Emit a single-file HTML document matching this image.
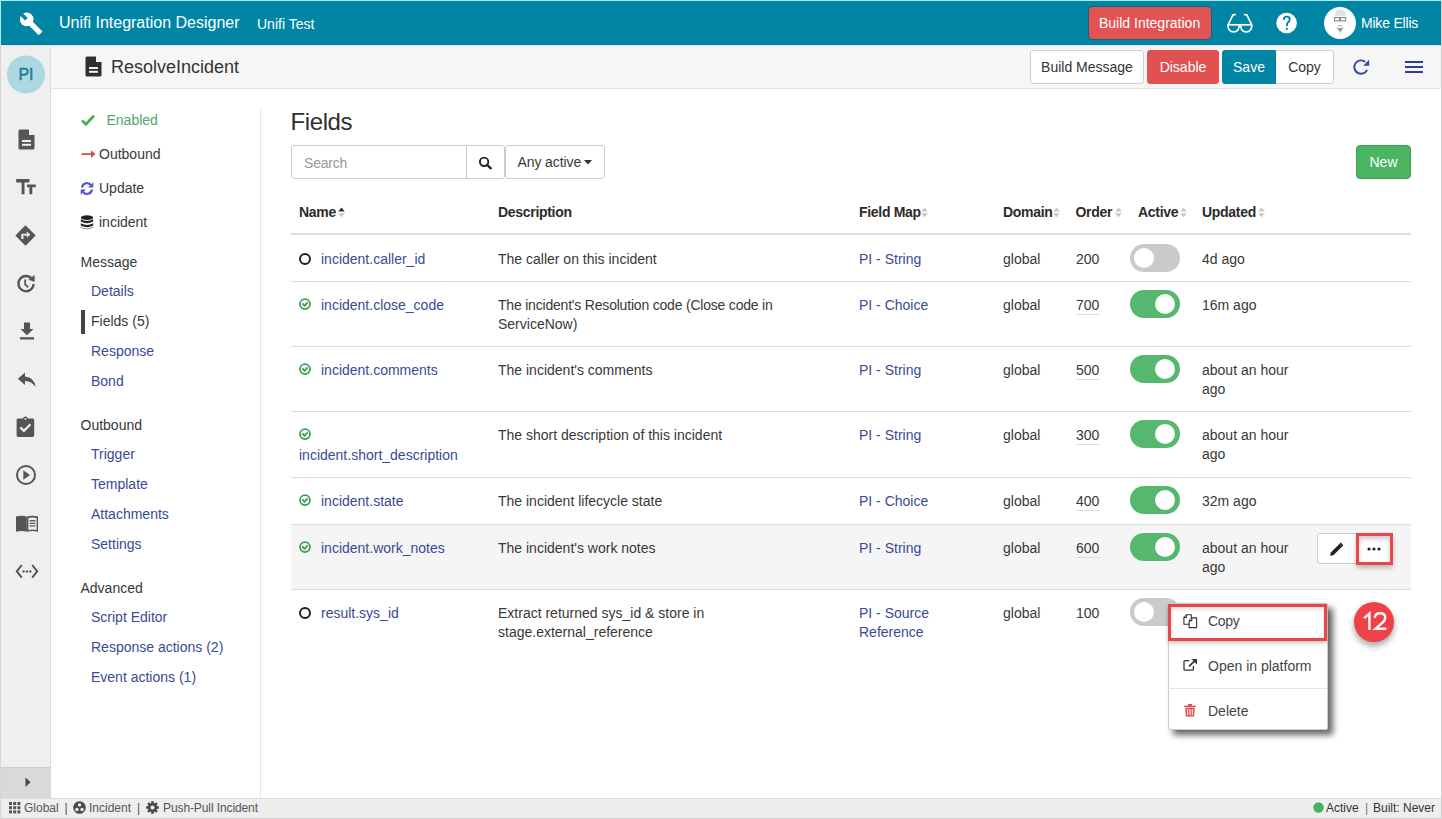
<!DOCTYPE html>
<html><head><meta charset="utf-8">
<style>
*{box-sizing:border-box;margin:0;padding:0}
html,body{width:1442px;height:819px;overflow:hidden;background:#fff;font-family:"Liberation Sans",sans-serif;color:#333;font-size:14px}
.a{position:absolute}
.t{position:absolute;white-space:nowrap;line-height:20px}
svg{position:absolute;overflow:visible}
#hdr{position:absolute;left:0;top:0;width:1442px;height:45px;background:#0085a5;border-top:1px solid #aee6f2;border-left:1px solid #b5e3ee}
#side{position:absolute;left:0;top:45px;width:51px;height:753px;background:#efefef;border-right:1px solid #dcdcdc;border-left:1px solid #d6d6d6}
#sub{position:absolute;left:51px;top:45px;width:1391px;height:44px;background:#f6f6f6;border-bottom:1px solid #e3e3e3}
#foot{position:absolute;left:0;top:798px;width:1442px;height:21px;background:#eeeeee;border-top:1px solid #dcdcdc;border-left:1px solid #d6d6d6;border-bottom:1px solid #cfcfcf}
#rb{position:absolute;left:1441px;top:0;width:1px;height:819px;background:#cfcfcf}
.btn{position:absolute;border:1px solid #cfcfcf;border-radius:3px;background:#fff;color:#333;font-size:14px;text-align:center;line-height:32px}
.lnk{color:#3c4f9f}
.nav{position:absolute;white-space:nowrap;font-size:14px;line-height:20px}
</style></head><body>
<div id="hdr">
  <svg style="left:13px;top:5.5px" width="34" height="34" viewBox="0 0 34 34">
    <circle cx="12.7" cy="12.4" r="6.8" fill="#fff"/>
    <line x1="12.7" y1="12.4" x2="26.6" y2="26.3" stroke="#fff" stroke-width="5.4"/>
    <line x1="3.5" y1="3.3" x2="12.4" y2="12.2" stroke="#0085a5" stroke-width="3.6"/>
  </svg>
  <div class="t" style="left:58px;top:12px;font-size:16px;color:#fff">Unifi Integration Designer</div>
  <div class="t" style="left:256px;top:13px;font-size:14px;color:#fff">Unifi Test</div>
  <div class="a" style="left:1088px;top:6px;width:122px;height:32px;background:#e05454;border-radius:4px;box-shadow:0 0 0 1px rgba(70,50,60,.45)"></div>
  <div class="t" style="left:1098px;top:12px;font-size:14px;color:#fff">Build Integration</div>
  <svg style="left:1219.5px;top:5px" width="34" height="34" viewBox="0 0 34 34">
    <g fill="none" stroke="#fff" stroke-width="1.7">
      <path d="M6.6 18.8 H31.2"/>
      <path d="M7.2 18.8 A5.6 5.6 0 1 0 18 18.8"/><path d="M19.8 18.8 A5.6 5.6 0 1 0 30.6 18.8"/>
      <path d="M7 19 L12 8.8 L14.9 8.5"/><path d="M30.8 19 L25.8 8.8 L22.9 8.5"/>
    </g>
  </svg>
  <svg style="left:1274px;top:10px" width="22" height="22" viewBox="0 0 22 22">
    <circle cx="11.6" cy="12" r="10.3" fill="#fff"/>
    <path d="M8.7 8.9 Q8.9 5.6 11.8 5.6 Q14.7 5.6 14.7 8.4 Q14.7 10.2 12.9 11.5 Q11.8 12.4 11.8 15.2" fill="none" stroke="#0085a5" stroke-width="1.9"/>
    <rect x="10.85" y="16.8" width="1.95" height="2" fill="#0085a5"/>
  </svg>
  <svg style="left:1320px;top:3px" width="38" height="38" viewBox="0 0 38 38">
    <circle cx="19" cy="19" r="16" fill="#fff"/>
    <path d="M13.8 12.3 Q13.8 5.2 19.2 5.2 Q24.8 5.2 24.8 12.3 Z" fill="#e3e3e3"/>
    <rect x="13.5" y="13.6" width="5.2" height="3.2" fill="none" stroke="#858585" stroke-width="1.1"/>
    <rect x="19.4" y="13.6" width="5.2" height="3.2" fill="none" stroke="#858585" stroke-width="1.1"/>
    <rect x="17.3" y="21.2" width="3.8" height="1.2" fill="#b0b0b0"/>
    <path d="M15.4 23.2 Q19 25.2 22.6 23.2 L19.3 28.2 Z" fill="#8f8f8f"/>
    <path d="M18 28 L19.3 33 L20.4 28 Z" fill="#e6e6e6"/>
  </svg>
  <div class="t" style="left:1360px;top:12px;font-size:14px;color:#fff;letter-spacing:-0.2px">Mike Ellis</div>
</div>
<div id="side">
  <svg style="left:9px;top:10px" width="32" height="32" viewBox="0 0 32 32">
    <circle cx="16" cy="19.5" r="19" fill="#acd8e2"/>
  </svg>
  <div class="t" style="left:-0.5px;top:20px;width:51px;text-align:center;font-size:16px;color:#1b7d99;-webkit-text-stroke:0.45px #1b7d99">PI</div>
  <svg style="left:16.7px;top:83.5px" width="17" height="21" viewBox="0 0 17 21">
    <path d="M2 0.5 H10.5 L16.5 6.5 V19 Q16.5 20.5 15 20.5 H2 Q0.5 20.5 0.5 19 V2 Q0.5 0.5 2 0.5 Z" fill="#555"/>
    <path d="M11 0.5 V6 H16.5 Z" fill="#efefef"/>
    <rect x="4" y="11" width="9" height="2" fill="#efefef"/><rect x="4" y="14.8" width="9" height="2" fill="#efefef"/>
  </svg>
  <svg style="left:15px;top:133.5px" width="21" height="16" viewBox="0 0 21 16">
    <path d="M0.2 0 H13.4 V3.4 H8.5 V15.2 H5.6 V3.4 H0.2 Z" fill="#555"/>
    <path d="M11 5.4 H19.8 V8.3 H16.3 V15.2 H13.4 V8.3 H11 Z" fill="#555"/>
  </svg>
  <svg style="left:14.2px;top:180px" width="22" height="22" viewBox="0 0 22 22">
    <path d="M10.5 0.3 L20.7 10.5 L10.5 20.7 L0.3 10.5 Z" fill="#555"/>
    <path d="M6.2 14 V10 Q6.2 8.8 7.4 8.8 H11.8 V6.4 L15.4 9.6 L11.8 12.8 V10.6 H8.4 V14 Z" fill="#efefef"/>
  </svg>
  <svg style="left:14.5px;top:228.5px" width="20" height="20" viewBox="0 0 20 20">
    <path d="M16.2 5.2 A7.6 7.6 0 1 0 17.6 10" fill="none" stroke="#555" stroke-width="2.3"/>
    <path d="M12.4 5.8 L18.6 1 L18.6 7.8 Z" fill="#555"/>
    <path d="M9.2 5.6 V10.6 L12.2 13.2" fill="none" stroke="#555" stroke-width="1.8"/>
  </svg>
  <svg style="left:17.5px;top:277px" width="16" height="18" viewBox="0 0 16 18">
    <path d="M5 0.5 H11 V7 H14.5 L8 13.2 L1.5 7 H5 Z" fill="#555"/>
    <rect x="1" y="15.2" width="14" height="2.3" fill="#555"/>
  </svg>
  <svg style="left:15.5px;top:327px" width="20" height="16" viewBox="0 0 20 16">
    <path d="M8 0.5 L0.8 6.8 L8 13 V9 Q14.5 8.8 18.5 15 Q17.5 5.2 8 4.5 Z" fill="#555"/>
  </svg>
  <svg style="left:15px;top:370.5px" width="20" height="22" viewBox="0 0 20 22">
    <rect x="0.6" y="2.5" width="17.6" height="18.4" rx="1.6" fill="#555"/>
    <circle cx="9.4" cy="2.8" r="2.3" fill="#555"/><circle cx="9.4" cy="2.9" r="0.9" fill="#efefef"/>
    <path d="M4.3 11.4 L7.9 14.9 L14.5 8.3" fill="none" stroke="#efefef" stroke-width="2.2"/>
  </svg>
  <svg style="left:13.8px;top:419px" width="22" height="22" viewBox="0 0 22 22">
    <circle cx="11" cy="11" r="9" fill="none" stroke="#555" stroke-width="2"/>
    <path d="M8.3 6.3 L15 11 L8.3 15.7 Z" fill="#555"/>
  </svg>
  <svg style="left:14px;top:470px" width="24" height="18" viewBox="0 0 24 18">
    <path d="M1 1.5 Q6.5 0 11.8 1.5 V16.8 Q6.5 15.3 1 16.8 Z" fill="#555"/>
    <path d="M12 1.5 Q17.5 0 23 1.5 V16.8 Q17.5 15.3 12 16.8 Z" fill="#555"/>
    <path d="M13.4 3 Q17.5 2 21.6 3 V15 Q17.5 14.2 13.4 15 Z" fill="#efefef"/>
    <g stroke="#555" stroke-width="1.3" fill="none"><path d="M14.6 6 Q17.5 5.2 20.4 6"/><path d="M14.6 8.6 Q17.5 7.8 20.4 8.6"/><path d="M14.6 11.2 Q17.5 10.4 20.4 11.2"/></g>
  </svg>
  <svg style="left:14px;top:519px" width="24" height="15" viewBox="0 0 24 15">
    <path d="M6.8 1 L1.8 7.3 L6.8 13.6" fill="none" stroke="#555" stroke-width="2"/>
    <path d="M17.2 1 L22.2 7.3 L17.2 13.6" fill="none" stroke="#555" stroke-width="2"/>
    <circle cx="8.6" cy="7.4" r="1.2" fill="#555"/><circle cx="12" cy="7.4" r="1.2" fill="#555"/><circle cx="15.4" cy="7.4" r="1.2" fill="#555"/>
  </svg>
  <div class="a" style="left:0;top:722px;width:50px;height:31px;background:#d9d9d9;border-top:1px solid #cdcdcd"></div>
  <svg style="left:23.5px;top:732px" width="7" height="11" viewBox="0 0 7 11"><path d="M0.5 0.5 L5.6 5.2 L0.5 9.9 Z" fill="#4a4a4a"/></svg>
</div>
<div id="sub">
  <svg style="left:34px;top:11px" width="17" height="21" viewBox="0 0 17 21">
    <path d="M2 0.5 H10.5 L16.5 6.5 V19 Q16.5 20.5 15 20.5 H2 Q0.5 20.5 0.5 19 V2 Q0.5 0.5 2 0.5 Z" fill="#2e2e2e"/>
    <path d="M11 0.5 V6 H16.5 Z" fill="#f5f5f5"/>
    <rect x="4" y="11" width="9" height="2" fill="#f5f5f5"/><rect x="4" y="14.8" width="9" height="2" fill="#f5f5f5"/>
  </svg>
  <div class="t" style="left:60px;top:12px;font-size:18px;line-height:20px;color:#333">ResolveIncident</div>
  <div class="btn" style="left:979px;top:5px;width:114px;height:34px">Build Message</div>
  <div class="btn" style="left:1096px;top:5px;width:72px;height:34px;background:#e05252;border-color:#e05252;color:#fff">Disable</div>
  <div class="btn" style="left:1171px;top:5px;width:54px;height:34px;background:#0085a5;border-color:#0085a5;color:#fff;border-radius:3px 0 0 3px">Save</div>
  <div class="btn" style="left:1225px;top:5px;width:58px;height:34px;border-radius:0 3px 3px 0;border-left:none">Copy</div>
  <svg style="left:1302px;top:14px" width="18" height="17" viewBox="0 0 18 17">
    <path d="M12.3 2.9 A6.7 6.7 0 1 0 14.1 10.8" fill="none" stroke="#3344a6" stroke-width="1.9"/>
    <path d="M16.2 0.8 V6.8 H10.2 Z" fill="#3344a6"/>
  </svg>
  <svg style="left:1354px;top:15px" width="18" height="14" viewBox="0 0 18 14">
    <rect x="0" y="1" width="18" height="2" fill="#2c3d92"/><rect x="0" y="6" width="18" height="2" fill="#2c3d92"/><rect x="0" y="11" width="18" height="2" fill="#2c3d92"/>
  </svg>
</div>
<div id="foot">
  <svg style="left:8px;top:3px" width="12" height="12" viewBox="0 0 12 12">
    <g fill="#555"><rect x="0" y="0" width="3" height="3"/><rect x="4.2" y="0" width="3" height="3"/><rect x="8.4" y="0" width="3" height="3"/>
    <rect x="0" y="4.2" width="3" height="3"/><rect x="4.2" y="4.2" width="3" height="3"/><rect x="8.4" y="4.2" width="3" height="3"/>
    <rect x="0" y="8.4" width="3" height="3"/><rect x="4.2" y="8.4" width="3" height="3"/><rect x="8.4" y="8.4" width="3" height="3"/></g>
  </svg>
  <div class="t" style="left:23px;top:0;font-size:12px;line-height:18px;color:#555">Global</div>
  <div class="t" style="left:63.5px;top:0;font-size:12px;line-height:18px;color:#555">|</div>
  <svg style="left:72px;top:2px" width="13" height="13" viewBox="0 0 13 13">
    <circle cx="6.5" cy="6.5" r="6.3" fill="#4a4a4a"/>
    <circle cx="6.5" cy="3.9" r="1.7" fill="#eee"/><circle cx="3.9" cy="8.5" r="1.8" fill="#eee"/><circle cx="9.1" cy="8.5" r="1.8" fill="#eee"/>
  </svg>
  <div class="t" style="left:88px;top:0;font-size:12px;line-height:18px;color:#555">Incident</div>
  <div class="t" style="left:136px;top:0;font-size:12px;line-height:18px;color:#555">|</div>
  <svg style="left:145.3px;top:2px" width="14" height="14" viewBox="0 0 14 14">
    <g fill="#4a4a4a"><circle cx="6.5" cy="6.5" r="4.6"/>
    <rect x="5.2" y="0.2" width="2.6" height="12.6"/><rect x="0.2" y="5.2" width="12.6" height="2.6"/>
    <rect x="5.2" y="0.2" width="2.6" height="12.6" transform="rotate(45 6.5 6.5)"/><rect x="5.2" y="0.2" width="2.6" height="12.6" transform="rotate(-45 6.5 6.5)"/></g>
    <circle cx="6.5" cy="6.5" r="2" fill="#eee"/>
  </svg>
  <div class="t" style="left:162px;top:0;font-size:12px;line-height:18px;color:#555;letter-spacing:-0.1px">Push-Pull Incident</div>
  <svg style="left:1312px;top:3px" width="11" height="11" viewBox="0 0 11 11"><circle cx="5.5" cy="5.5" r="5.2" fill="#3fb65a"/></svg>
  <div class="t" style="left:1325px;top:0;font-size:12px;line-height:18px;color:#333">Active</div>
  <div class="t" style="left:1364px;top:0;font-size:12px;line-height:18px;color:#777">|</div>
  <div class="t" style="left:1372px;top:0;font-size:12px;line-height:18px;color:#333">Built: Never</div>
</div>
<div class="a" style="left:1px;top:44px;width:1440px;height:1px;background:#13738c"></div>
<div class="a" style="left:1px;top:45px;width:1440px;height:1px;background:#d3eff6"></div>
<div class="a" style="left:1px;top:46px;width:1440px;height:1px;background:#e9eeef"></div>
<!--MAIN-->
<svg style="left:81px;top:114px" width="14" height="12" viewBox="0 0 14 12"><path d="M1 6.5 L5 10.3 L13 1.8" fill="none" stroke="#4aad5b" stroke-width="2.8"/></svg>
<div class="t" style="left:106.5px;top:113.10px;font-size:14px;line-height:14px;color:#52a373;">Enabled</div>
<svg style="left:81px;top:150px" width="15" height="8" viewBox="0 0 15 8"><rect x="0.5" y="3.2" width="11" height="1.8" fill="#d0514f"/><path d="M10 0.3 L14.5 4.1 L10 7.9 Z" fill="#d0514f"/></svg>
<div class="t" style="left:99px;top:147.10px;font-size:14px;line-height:14px;color:#383838;">Outbound</div>
<svg style="left:80px;top:182px" width="14" height="13" viewBox="0 0 14 13"><path d="M2 5.5 A5 5 0 0 1 11 3.2" fill="none" stroke="#5b52d3" stroke-width="2.2"/><path d="M13.3 0.2 V5.6 H8 Z" fill="#5b52d3"/><path d="M12 7.5 A5 5 0 0 1 3 9.8" fill="none" stroke="#5b52d3" stroke-width="2.2"/><path d="M0.7 12.8 V7.4 H6 Z" fill="#5b52d3"/></svg>
<div class="t" style="left:99px;top:180.60px;font-size:14px;line-height:14px;color:#383838;">Update</div>
<svg style="left:80px;top:215px" width="14" height="15" viewBox="0 0 14 15"><g fill="#222"><ellipse cx="7" cy="2.6" rx="6.2" ry="2.4"/><path d="M0.8 4.2 Q7 7.6 13.2 4.2 V6.6 Q7 10 0.8 6.6 Z"/><path d="M0.8 8.2 Q7 11.6 13.2 8.2 V10.6 Q7 14 0.8 10.6 Z"/><path d="M0.8 12 Q7 15.4 13.2 12 V12.6 Q7 16 0.8 12.6 Z"/></g></svg>
<div class="t" style="left:99px;top:214.70px;font-size:14px;line-height:14px;color:#383838;">incident</div>
<div class="t" style="left:80.5px;top:255.10px;font-size:14px;line-height:14px;color:#383838;">Message</div>
<div class="t" style="left:91px;top:284.10px;font-size:14px;line-height:14px;color:#3a4a96;">Details</div>
<div class="a" style="left:81px;top:310px;width:4px;height:24px;background:#444"></div>
<div class="t" style="left:91px;top:314.10px;font-size:14px;line-height:14px;color:#383838;">Fields (5)</div>
<div class="t" style="left:91px;top:344.10px;font-size:14px;line-height:14px;color:#3a4a96;">Response</div>
<div class="t" style="left:91px;top:374.10px;font-size:14px;line-height:14px;color:#3a4a96;">Bond</div>
<div class="t" style="left:80.5px;top:418.10px;font-size:14px;line-height:14px;color:#383838;">Outbound</div>
<div class="t" style="left:91px;top:447.10px;font-size:14px;line-height:14px;color:#3a4a96;">Trigger</div>
<div class="t" style="left:91px;top:477.10px;font-size:14px;line-height:14px;color:#3a4a96;">Template</div>
<div class="t" style="left:91px;top:507.10px;font-size:14px;line-height:14px;color:#3a4a96;">Attachments</div>
<div class="t" style="left:91px;top:537.10px;font-size:14px;line-height:14px;color:#3a4a96;">Settings</div>
<div class="t" style="left:80.5px;top:581.10px;font-size:14px;line-height:14px;color:#383838;">Advanced</div>
<div class="t" style="left:91px;top:610.10px;font-size:14px;line-height:14px;color:#3a4a96;">Script Editor</div>
<div class="t" style="left:91px;top:640.10px;font-size:14px;line-height:14px;color:#3a4a96;">Response actions (2)</div>
<div class="t" style="left:91px;top:670.10px;font-size:14px;line-height:14px;color:#3a4a96;">Event actions (1)</div>
<div class="a" style="left:260px;top:108px;width:1px;height:690px;background:#e6e6e6"></div>
<div class="t" style="left:290.5px;top:110.20px;font-size:24px;line-height:24px;color:#303030;letter-spacing:-0.4px;">Fields</div>
<div class="a" style="left:291px;top:145px;width:214px;height:34px;border:1px solid #ccc;border-radius:3px;background:#fff"></div>
<div class="a" style="left:466px;top:145px;width:1px;height:34px;background:#ccc"></div>
<div class="t" style="left:304px;top:155.90px;font-size:14px;line-height:14px;color:#999;letter-spacing:-0.2px;">Search</div>
<svg style="left:478px;top:156px" width="15" height="15" viewBox="0 0 15 15"><circle cx="6.1" cy="5.8" r="4.2" fill="none" stroke="#222" stroke-width="1.9"/><path d="M9.2 9 L12.8 12.3" stroke="#222" stroke-width="2.3" stroke-linecap="round"/></svg>
<div class="a" style="left:505px;top:145px;width:100px;height:34px;border:1px solid #ccc;border-radius:3px;background:#fff"></div>
<div class="t" style="left:517.5px;top:154.90px;font-size:14px;line-height:14px;color:#383838;letter-spacing:-0.1px;">Any active</div>
<svg style="left:584px;top:160px" width="8" height="5" viewBox="0 0 8 5"><path d="M0 0 H8 L4 4.5 Z" fill="#333"/></svg>
<div class="a" style="left:1356px;top:145px;width:55px;height:34px;background:#4bb562;border:1px solid #429f56;border-radius:4px"></div>
<div class="t" style="left:1369.5px;top:155.10px;font-size:14px;line-height:14px;color:#fff;">New</div>
<div class="t" style="left:299px;top:205.00px;font-size:14px;line-height:14px;color:#2b2b2b;font-weight:700;letter-spacing:-0.3px;">Name</div>
<svg style="left:338px;top:207px" width="7" height="11" viewBox="0 0 7 11"><path d="M0.2 4.4 L3.5 0.4 L6.8 4.4 Z" fill="#333"/><path d="M0.2 6.2 L3.5 10.2 L6.8 6.2 Z" fill="#c8c8c8"/></svg>
<div class="t" style="left:498px;top:205.00px;font-size:14px;line-height:14px;color:#2b2b2b;font-weight:700;letter-spacing:-0.3px;">Description</div>
<div class="t" style="left:859px;top:205.00px;font-size:14px;line-height:14px;color:#2b2b2b;font-weight:700;letter-spacing:-0.3px;">Field Map</div>
<svg style="left:921px;top:207px" width="7" height="11" viewBox="0 0 7 11"><path d="M0.2 4.4 L3.5 0.4 L6.8 4.4 Z" fill="#c8c8c8"/><path d="M0.2 6.2 L3.5 10.2 L6.8 6.2 Z" fill="#c8c8c8"/></svg>
<div class="t" style="left:1003px;top:205.00px;font-size:14px;line-height:14px;color:#2b2b2b;font-weight:700;letter-spacing:-0.3px;">Domain</div>
<svg style="left:1053px;top:207px" width="7" height="11" viewBox="0 0 7 11"><path d="M0.2 4.4 L3.5 0.4 L6.8 4.4 Z" fill="#c8c8c8"/><path d="M0.2 6.2 L3.5 10.2 L6.8 6.2 Z" fill="#c8c8c8"/></svg>
<div class="t" style="left:1075.5px;top:205.00px;font-size:14px;line-height:14px;color:#2b2b2b;font-weight:700;letter-spacing:-0.3px;">Order</div>
<svg style="left:1115px;top:207px" width="7" height="11" viewBox="0 0 7 11"><path d="M0.2 4.4 L3.5 0.4 L6.8 4.4 Z" fill="#c8c8c8"/><path d="M0.2 6.2 L3.5 10.2 L6.8 6.2 Z" fill="#c8c8c8"/></svg>
<div class="t" style="left:1138px;top:205.00px;font-size:14px;line-height:14px;color:#2b2b2b;font-weight:700;letter-spacing:-0.3px;">Active</div>
<svg style="left:1179.5px;top:207px" width="7" height="11" viewBox="0 0 7 11"><path d="M0.2 4.4 L3.5 0.4 L6.8 4.4 Z" fill="#c8c8c8"/><path d="M0.2 6.2 L3.5 10.2 L6.8 6.2 Z" fill="#c8c8c8"/></svg>
<div class="t" style="left:1202px;top:205.00px;font-size:14px;line-height:14px;color:#2b2b2b;font-weight:700;letter-spacing:-0.3px;">Updated</div>
<svg style="left:1257.5px;top:207px" width="7" height="11" viewBox="0 0 7 11"><path d="M0.2 4.4 L3.5 0.4 L6.8 4.4 Z" fill="#c8c8c8"/><path d="M0.2 6.2 L3.5 10.2 L6.8 6.2 Z" fill="#c8c8c8"/></svg>
<div class="a" style="left:291px;top:233px;width:1120px;height:2px;background:#ddd"></div>
<div class="a" style="left:291px;top:525px;width:1120px;height:64px;background:#f5f5f5"></div>
<div class="a" style="left:291px;top:281px;width:1120px;height:1px;background:#ddd"></div>
<div class="a" style="left:291px;top:346px;width:1120px;height:1px;background:#ddd"></div>
<div class="a" style="left:291px;top:411px;width:1120px;height:1px;background:#ddd"></div>
<div class="a" style="left:291px;top:477px;width:1120px;height:1px;background:#ddd"></div>
<div class="a" style="left:291px;top:524px;width:1120px;height:1px;background:#ddd"></div>
<div class="a" style="left:291px;top:589px;width:1120px;height:1px;background:#ddd"></div>
<svg style="left:299px;top:253px" width="13" height="13" viewBox="0 0 13 13"><circle cx="6" cy="6" r="5" fill="none" stroke="#222" stroke-width="2"/></svg>
<div class="t" style="left:321px;top:252.10px;font-size:14px;line-height:14px;color:#3a4a96;">incident.caller_id</div>
<div class="t" style="left:498px;top:252.10px;font-size:14px;line-height:14px;color:#383838;">The caller on this incident</div>
<div class="t" style="left:859px;top:252.10px;font-size:14px;line-height:14px;color:#3a4a96;">PI - String</div>
<div class="t" style="left:1003px;top:252.10px;font-size:14px;line-height:14px;color:#383838;">global</div>
<div class="t" style="left:1076px;top:252.10px;font-size:14px;line-height:14px;color:#383838;">200</div>
<div class="a" style="left:1130px;top:244px;width:50px;height:28px;background:#cacaca;border-radius:14px"></div>
<div class="a" style="left:1134px;top:248px;width:20px;height:20px;background:#fff;border-radius:10px"></div>
<div class="t" style="left:1202px;top:252.10px;font-size:14px;line-height:14px;color:#383838;">4d ago</div>
<svg style="left:299px;top:299px" width="13" height="13" viewBox="0 0 13 13"><circle cx="6" cy="5.1" r="5" fill="none" stroke="#3f9e57" stroke-width="1.8"/><path d="M3.4 4.3 L5.5 6.9 L8.7 3.4" fill="none" stroke="#3f9e57" stroke-width="1.9"/></svg>
<div class="t" style="left:321px;top:298.10px;font-size:14px;line-height:14px;color:#3a4a96;">incident.close_code</div>
<div class="t" style="left:498px;top:298.10px;font-size:14px;line-height:14px;color:#383838;letter-spacing:-0.2px;">The incident's Resolution code (Close code in</div>
<div class="t" style="left:498px;top:317.10px;font-size:14px;line-height:14px;color:#383838;">ServiceNow)</div>
<div class="t" style="left:859px;top:298.10px;font-size:14px;line-height:14px;color:#3a4a96;">PI - Choice</div>
<div class="t" style="left:1003px;top:298.10px;font-size:14px;line-height:14px;color:#383838;">global</div>
<div class="t" style="left:1076px;top:298.10px;font-size:14px;line-height:14px;color:#383838;">700</div>
<div class="a" style="left:1076px;top:314px;width:24px;height:1px;background:#dcdcdc"></div>
<div class="a" style="left:1130px;top:290px;width:50px;height:28px;background:#56b86e;border-radius:14px"></div>
<div class="a" style="left:1155px;top:294px;width:20px;height:20px;background:#fff;border-radius:10px"></div>
<div class="t" style="left:1202px;top:298.10px;font-size:14px;line-height:14px;color:#383838;">16m ago</div>
<svg style="left:299px;top:364px" width="13" height="13" viewBox="0 0 13 13"><circle cx="6" cy="5.1" r="5" fill="none" stroke="#3f9e57" stroke-width="1.8"/><path d="M3.4 4.3 L5.5 6.9 L8.7 3.4" fill="none" stroke="#3f9e57" stroke-width="1.9"/></svg>
<div class="t" style="left:321px;top:363.10px;font-size:14px;line-height:14px;color:#3a4a96;">incident.comments</div>
<div class="t" style="left:498px;top:363.10px;font-size:14px;line-height:14px;color:#383838;">The incident's comments</div>
<div class="t" style="left:859px;top:363.10px;font-size:14px;line-height:14px;color:#3a4a96;">PI - String</div>
<div class="t" style="left:1003px;top:363.10px;font-size:14px;line-height:14px;color:#383838;">global</div>
<div class="t" style="left:1076px;top:363.10px;font-size:14px;line-height:14px;color:#383838;">500</div>
<div class="a" style="left:1076px;top:379px;width:24px;height:1px;background:#dcdcdc"></div>
<div class="a" style="left:1130px;top:355px;width:50px;height:28px;background:#56b86e;border-radius:14px"></div>
<div class="a" style="left:1155px;top:359px;width:20px;height:20px;background:#fff;border-radius:10px"></div>
<div class="t" style="left:1202px;top:363.10px;font-size:14px;line-height:14px;color:#383838;">about an hour</div>
<div class="t" style="left:1202px;top:382.10px;font-size:14px;line-height:14px;color:#383838;">ago</div>
<svg style="left:299px;top:429px" width="13" height="13" viewBox="0 0 13 13"><circle cx="6" cy="5.1" r="5" fill="none" stroke="#3f9e57" stroke-width="1.8"/><path d="M3.4 4.3 L5.5 6.9 L8.7 3.4" fill="none" stroke="#3f9e57" stroke-width="1.9"/></svg>
<div class="t" style="left:299px;top:448.10px;font-size:14px;line-height:14px;color:#3a4a96;">incident.short_description</div>
<div class="t" style="left:498px;top:428.10px;font-size:14px;line-height:14px;color:#383838;">The short description of this incident</div>
<div class="t" style="left:859px;top:428.10px;font-size:14px;line-height:14px;color:#3a4a96;">PI - String</div>
<div class="t" style="left:1003px;top:428.10px;font-size:14px;line-height:14px;color:#383838;">global</div>
<div class="t" style="left:1076px;top:428.10px;font-size:14px;line-height:14px;color:#383838;">300</div>
<div class="a" style="left:1076px;top:444px;width:24px;height:1px;background:#dcdcdc"></div>
<div class="a" style="left:1130px;top:420px;width:50px;height:28px;background:#56b86e;border-radius:14px"></div>
<div class="a" style="left:1155px;top:424px;width:20px;height:20px;background:#fff;border-radius:10px"></div>
<div class="t" style="left:1202px;top:428.10px;font-size:14px;line-height:14px;color:#383838;">about an hour</div>
<div class="t" style="left:1202px;top:447.10px;font-size:14px;line-height:14px;color:#383838;">ago</div>
<svg style="left:299px;top:495px" width="13" height="13" viewBox="0 0 13 13"><circle cx="6" cy="5.1" r="5" fill="none" stroke="#3f9e57" stroke-width="1.8"/><path d="M3.4 4.3 L5.5 6.9 L8.7 3.4" fill="none" stroke="#3f9e57" stroke-width="1.9"/></svg>
<div class="t" style="left:321px;top:494.10px;font-size:14px;line-height:14px;color:#3a4a96;">incident.state</div>
<div class="t" style="left:498px;top:494.10px;font-size:14px;line-height:14px;color:#383838;">The incident lifecycle state</div>
<div class="t" style="left:859px;top:494.10px;font-size:14px;line-height:14px;color:#3a4a96;">PI - Choice</div>
<div class="t" style="left:1003px;top:494.10px;font-size:14px;line-height:14px;color:#383838;">global</div>
<div class="t" style="left:1076px;top:494.10px;font-size:14px;line-height:14px;color:#383838;">400</div>
<div class="a" style="left:1076px;top:510px;width:24px;height:1px;background:#dcdcdc"></div>
<div class="a" style="left:1130px;top:486px;width:50px;height:28px;background:#56b86e;border-radius:14px"></div>
<div class="a" style="left:1155px;top:490px;width:20px;height:20px;background:#fff;border-radius:10px"></div>
<div class="t" style="left:1202px;top:494.10px;font-size:14px;line-height:14px;color:#383838;">32m ago</div>
<svg style="left:299px;top:542px" width="13" height="13" viewBox="0 0 13 13"><circle cx="6" cy="5.1" r="5" fill="none" stroke="#3f9e57" stroke-width="1.8"/><path d="M3.4 4.3 L5.5 6.9 L8.7 3.4" fill="none" stroke="#3f9e57" stroke-width="1.9"/></svg>
<div class="t" style="left:321px;top:541.10px;font-size:14px;line-height:14px;color:#3a4a96;">incident.work_notes</div>
<div class="t" style="left:498px;top:541.10px;font-size:14px;line-height:14px;color:#383838;">The incident's work notes</div>
<div class="t" style="left:859px;top:541.10px;font-size:14px;line-height:14px;color:#3a4a96;">PI - String</div>
<div class="t" style="left:1003px;top:541.10px;font-size:14px;line-height:14px;color:#383838;">global</div>
<div class="t" style="left:1076px;top:541.10px;font-size:14px;line-height:14px;color:#383838;">600</div>
<div class="a" style="left:1076px;top:557px;width:24px;height:1px;background:#dcdcdc"></div>
<div class="a" style="left:1130px;top:533px;width:50px;height:28px;background:#56b86e;border-radius:14px"></div>
<div class="a" style="left:1155px;top:537px;width:20px;height:20px;background:#fff;border-radius:10px"></div>
<div class="t" style="left:1202px;top:541.10px;font-size:14px;line-height:14px;color:#383838;">about an hour</div>
<div class="t" style="left:1202px;top:560.10px;font-size:14px;line-height:14px;color:#383838;">ago</div>
<svg style="left:299px;top:607px" width="13" height="13" viewBox="0 0 13 13"><circle cx="6" cy="6" r="5" fill="none" stroke="#222" stroke-width="2"/></svg>
<div class="t" style="left:321px;top:606.10px;font-size:14px;line-height:14px;color:#3a4a96;">result.sys_id</div>
<div class="t" style="left:498px;top:606.10px;font-size:14px;line-height:14px;color:#383838;">Extract returned sys_id &amp; store in</div>
<div class="t" style="left:498px;top:625.10px;font-size:14px;line-height:14px;color:#383838;">stage.external_reference</div>
<div class="t" style="left:859px;top:606.10px;font-size:14px;line-height:14px;color:#3a4a96;">PI - Source</div>
<div class="t" style="left:859px;top:625.10px;font-size:14px;line-height:14px;color:#3a4a96;">Reference</div>
<div class="t" style="left:1003px;top:606.10px;font-size:14px;line-height:14px;color:#383838;">global</div>
<div class="t" style="left:1076px;top:606.10px;font-size:14px;line-height:14px;color:#383838;">100</div>
<div class="a" style="left:1130px;top:598px;width:50px;height:28px;background:#cacaca;border-radius:14px"></div>
<div class="a" style="left:1134px;top:602px;width:20px;height:20px;background:#fff;border-radius:10px"></div>
<div class="a" style="left:1317px;top:533px;width:40px;height:31px;background:#fff;border:1px solid #ccc;border-radius:3px 0 0 3px"></div>
<svg style="left:1329px;top:542px" width="15" height="15" viewBox="0 0 15 15"><path d="M1.2 13.8 L1.8 10.6 L10.6 1.8 L13.2 4.4 L4.4 13.2 Z" fill="#222"/><path d="M10.6 1.8 L11.8 0.6 L14.4 3.2 L13.2 4.4 Z" fill="#222"/></svg>
<div class="a" style="left:1356px;top:533px;width:37px;height:32px;background:#fff;border:3px solid #e5474c;box-shadow:inset 0 3px 5px rgba(0,0,0,.2),0 3px 5px rgba(0,0,0,.25)"></div>
<svg style="left:1367px;top:547px" width="14" height="4" viewBox="0 0 14 4"><circle cx="2" cy="2" r="1.6" fill="#222"/><circle cx="7" cy="2" r="1.6" fill="#222"/><circle cx="12" cy="2" r="1.6" fill="#222"/></svg>
<div class="a" style="left:1168px;top:603px;width:160px;height:127px;background:#fff;border:1px solid #ccc;border-radius:2px;box-shadow:5px 5px 6px rgba(0,0,0,.6)"></div>
<div class="a" style="left:1168px;top:688px;width:159px;height:1px;background:#e5e5e5"></div>
<div class="a" style="left:1168px;top:604px;width:159px;height:37px;border:3px solid #e5474c;box-shadow:0 2px 4px rgba(0,0,0,.25),inset 0 2px 4px rgba(0,0,0,.14)"></div>
<svg style="left:1183px;top:615px" width="15" height="14" viewBox="0 0 15 14"><g fill="#fff" stroke="#333" stroke-width="1.1" stroke-linejoin="round"><path d="M3.4 -0.2 H8.3 V9.2 H0.9 V2.4 Z"/><path d="M0.9 2.4 H3.4 V-0.2"/><path d="M8.8 2.9 H13.6 V12.6 H6.2 V5.6 Z"/><path d="M6.2 5.6 H8.8 V2.9"/></g></svg>
<div class="t" style="left:1208px;top:613.80px;font-size:14px;line-height:14px;color:#444;letter-spacing:-0.3px;">Copy</div>
<svg style="left:1183px;top:659px" width="15" height="12" viewBox="0 0 15 12"><path d="M6.2 1.6 H2.2 Q1 1.6 1 2.8 V10 Q1 11.2 2.2 11.2 H9.2 Q10.4 11.2 10.4 10 V7" fill="none" stroke="#333" stroke-width="1.3"/><path d="M6 7.4 L12.2 1.4" stroke="#333" stroke-width="1.6"/><path d="M8.6 0.1 H14 V5.5 Z" fill="#333"/></svg>
<div class="t" style="left:1208px;top:658.70px;font-size:14px;line-height:14px;color:#444;">Open in platform</div>
<svg style="left:1184px;top:704px" width="12" height="13" viewBox="0 0 12 13"><g fill="#d9534f"><rect x="0.2" y="1.6" width="11.6" height="1.6"/><rect x="4" y="0" width="4" height="2"/><path d="M1.2 3.8 H10.8 L10.2 12.6 H1.8 Z"/></g><g fill="#fff"><rect x="3.2" y="5" width="1" height="6"/><rect x="5.5" y="5" width="1" height="6"/><rect x="7.8" y="5" width="1" height="6"/></g></svg>
<div class="t" style="left:1208px;top:704.10px;font-size:14px;line-height:14px;color:#444;">Delete</div>
<div class="a" style="left:1354px;top:602px;width:40px;height:40px;background:#ef4146;border-radius:20px;box-shadow:0 4px 6px rgba(0,0,0,.35)"></div>
<svg style="left:1360px;top:610px" width="30" height="22" viewBox="0 0 30 22"><g fill="none" stroke="#fff" stroke-width="2.4" stroke-linejoin="miter"><path d="M4.2 8.2 L9.4 3.6 V19.7"/><path d="M14.9 7.8 Q15 3.3 20.1 3.3 Q25.2 3.3 25.2 7.8 Q25.2 10.2 22.8 12.4 L15.5 18.7 H26.4"/></g></svg>
<!--/MAIN-->
<div id="rb"></div>
</body></html>
